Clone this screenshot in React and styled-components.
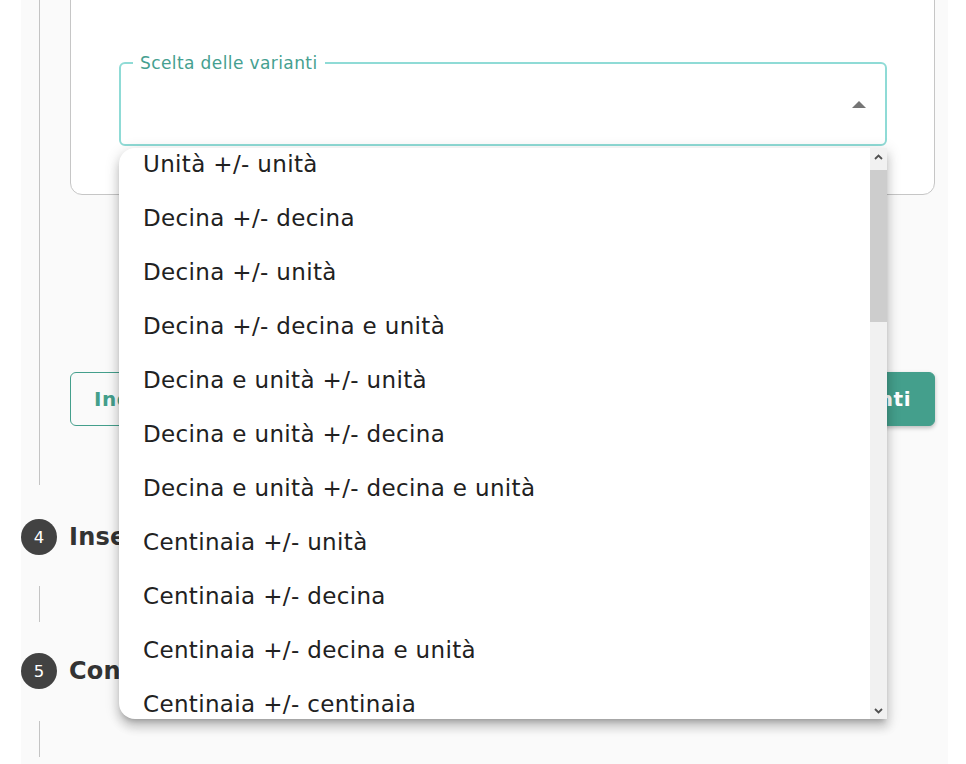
import React from "react";
import styled, { createGlobalStyle } from "styled-components";

const GlobalStyle = createGlobalStyle`
  html, body { margin: 0; padding: 0; background: #ffffff; }
  body { font-family: "DejaVu Sans", "Noto Sans", sans-serif; color: #212121; overflow: hidden; }
  * { box-sizing: border-box; }
`;

const TEAL = "#449f8c";

const Panel = styled.main`
  display: flex;
  flex-direction: column;
  margin-left: 21px;
  width: 927px;
  min-height: 100vh;
  padding-right: 13px;
  background: #fafafa;
`;

const StepHeader = styled.div`
  display: grid;
  grid-template-columns: 36px 1fr;
  column-gap: 12px;
  align-items: center;
  margin-top: ${(p) => p.$top || 0}px;
`;

const StepNumber = styled.div`
  width: 36px;
  height: 36px;
  border-radius: 50%;
  background: #424242;
  color: #ffffff;
  display: flex;
  align-items: center;
  justify-content: center;
  font-size: 16.5px;
`;

const StepTitle = styled.h2`
  margin: 0;
  font-size: 24px;
  font-weight: 700;
  color: #333333;
  white-space: nowrap;
  letter-spacing: 0.2px;
`;

const StepBody = styled.div`
  display: grid;
  grid-template-columns: 36px 1fr;
  column-gap: 13px;
  margin-top: ${(p) => p.$top || 0}px;
  margin-bottom: ${(p) => p.$bottom || 0}px;
`;

const Connector = styled.div`
  justify-self: center;
  width: 1px;
  background: #c4c4c4;
`;

const StepContent = styled.div`
  min-height: 36px;
  padding-bottom: ${(p) => p.$pad || 0}px;
`;

const Card = styled.section`
  margin-top: -40px;
  background: #ffffff;
  border: 1px solid #c6c6c6;
  border-radius: 12px;
  padding: 94px 47px 48px 48px;
`;

const SelectWrap = styled.div`
  position: relative;
`;

const Outline = styled.fieldset`
  margin: 0;
  min-width: 0;
  padding: 0 19px 0 12px;
  border: 2px solid #8fdbd6;
  border-radius: 6px;
  background: #ffffff;
`;

const Legend = styled.legend`
  padding: 0 7px;
  font-size: 17px;
  line-height: 16px;
  letter-spacing: 0.4px;
  color: #45a090;
`;

const SelectRow = styled.div`
  height: 73px;
  padding-bottom: 7px;
  display: flex;
  align-items: center;
  justify-content: flex-end;
`;

const Menu = styled.div`
  position: absolute;
  top: calc(100% + 2px);
  left: 0;
  right: 0;
  height: 571px;
  display: flex;
  background: #ffffff;
  border-radius: 16px 0 0 16px;
  overflow: hidden;
  box-shadow: 0 5px 5px -3px rgba(0, 0, 0, 0.2), 0 8px 10px 1px rgba(0, 0, 0, 0.14),
    0 3px 14px 2px rgba(0, 0, 0, 0.12);
  z-index: 10;
`;

const OptionList = styled.ul`
  flex: 1;
  list-style: none;
  margin: -11px 0 0 0;
  padding: 0;
`;

const Option = styled.li`
  height: 54px;
  display: flex;
  align-items: center;
  padding-left: 24px;
  font-size: 23px;
  letter-spacing: 0.35px;
  color: #212121;
  white-space: nowrap;
`;

const Scrollbar = styled.div`
  width: 17px;
  display: flex;
  flex-direction: column;
  background: #f1f1f1;
`;

const ScrollButton = styled.div`
  height: 17px;
  display: flex;
  align-items: center;
  justify-content: center;
  flex-shrink: 0;
`;

const ScrollTrack = styled.div`
  flex: 1;
`;

const Thumb = styled.div`
  margin-top: 5px;
  height: 152px;
  background: #cdcdcd;
`;

const Actions = styled.div`
  margin-top: 177px;
  display: flex;
  justify-content: space-between;
`;

const Button = styled.button`
  height: 54px;
  padding: 0 23px;
  border-radius: 6px;
  font-family: "DejaVu Sans", sans-serif;
  font-size: 20px;
  font-weight: 700;
  letter-spacing: 0.5px;
  border: 1px solid ${TEAL};
  color: ${(p) => (p.$filled ? "#ffffff" : TEAL)};
  background: ${(p) => (p.$filled ? TEAL : "transparent")};
  box-shadow: ${(p) => (p.$filled ? "0 2px 4px rgba(0,0,0,0.25)" : "none")};
`;

const options = [
  "Unità +/- unità",
  "Decina +/- decina",
  "Decina +/- unità",
  "Decina +/- decina e unità",
  "Decina e unità +/- unità",
  "Decina e unità +/- decina",
  "Decina e unità +/- decina e unità",
  "Centinaia +/- unità",
  "Centinaia +/- decina",
  "Centinaia +/- decina e unità",
  "Centinaia +/- centinaia",
];

const Chevron = ({ up }) => (
  <svg width="9" height="6" viewBox="0 0 9 6">
    <path
      d={up ? "M1 5 L4.5 1.5 L8 5" : "M1 1 L4.5 4.5 L8 1"}
      fill="none"
      stroke="#505050"
      strokeWidth="1.8"
    />
  </svg>
);

const ArrowUp = () => (
  <svg width="14" height="7" viewBox="0 0 14 7">
    <path d="M0 7 L7 0 L14 7 Z" fill="#757575" />
  </svg>
);

export default function App() {
  return (
    <>
      <GlobalStyle />
      <Panel>
        <StepBody>
          <Connector />
          <StepContent $pad={59}>
            <Card>
              <SelectWrap>
                <Outline>
                  <Legend>Scelta delle varianti</Legend>
                  <SelectRow>
                    <ArrowUp />
                  </SelectRow>
                </Outline>
                <Menu role="listbox">
                  <OptionList>
                    {options.map((o) => (
                      <Option key={o}>{o}</Option>
                    ))}
                  </OptionList>
                  <Scrollbar>
                    <ScrollButton>
                      <Chevron up />
                    </ScrollButton>
                    <ScrollTrack>
                      <Thumb />
                    </ScrollTrack>
                    <ScrollButton>
                      <Chevron />
                    </ScrollButton>
                  </Scrollbar>
                </Menu>
              </SelectWrap>
            </Card>
            <Actions>
              <Button>Indietro</Button>
              <Button $filled>Genera varianti</Button>
            </Actions>
          </StepContent>
        </StepBody>

        <StepHeader $top={34}>
          <StepNumber>4</StepNumber>
          <StepTitle>Inserimento dati</StepTitle>
        </StepHeader>
        <StepBody $top={31} $bottom={31}>
          <Connector />
          <StepContent />
        </StepBody>

        <StepHeader>
          <StepNumber>5</StepNumber>
          <StepTitle>Conferma</StepTitle>
        </StepHeader>
        <StepBody $top={32}>
          <Connector />
          <StepContent />
        </StepBody>
      </Panel>
    </>
  );
}
